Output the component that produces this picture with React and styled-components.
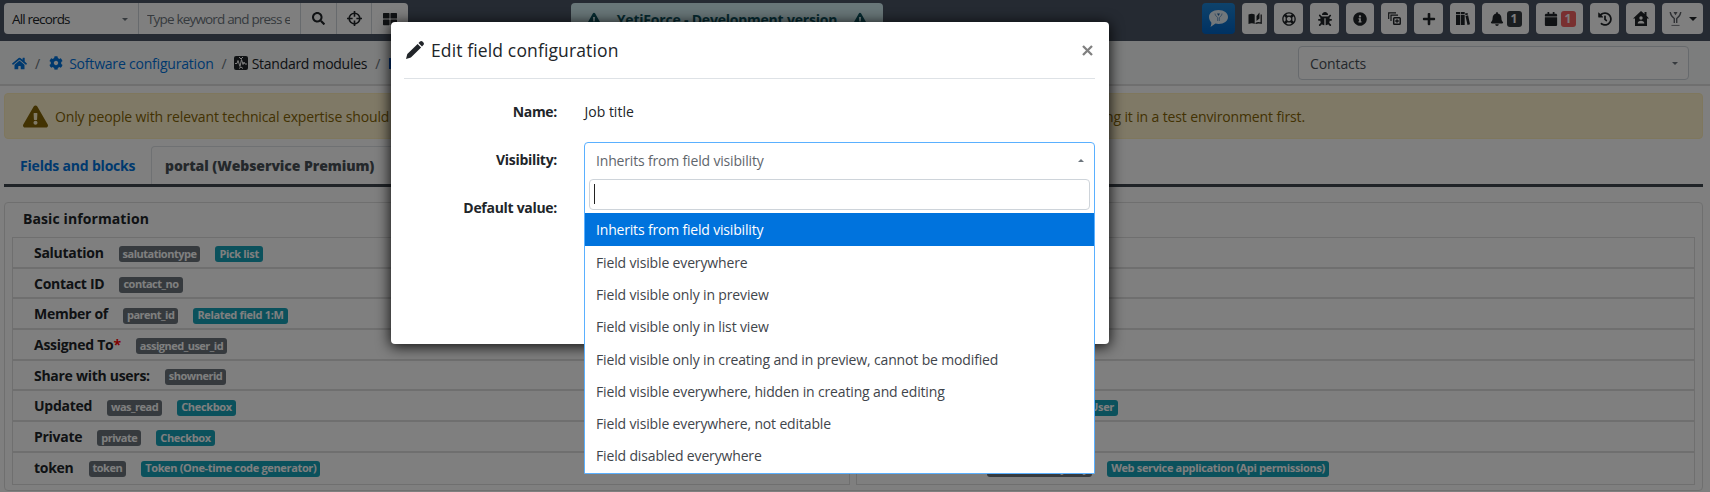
import React from 'react';
import styled, { createGlobalStyle, css } from 'styled-components';
import { FaSearch, FaThLarge, FaHome, FaCog, FaExclamationTriangle, FaBug, FaInfoCircle, FaPlus, FaBell, FaCalendar, FaHistory, FaRegLifeRing } from 'react-icons/fa';

const Global = createGlobalStyle`
  * { box-sizing: border-box; }
  html, body { margin: 0; height: 100%; overflow: hidden; background: #fff; }
  body { font: 14px/1.5 "Open Sans", "Noto Sans", sans-serif; color: #212529; }
  svg { display: block; flex: none; }
`;

const Screen = styled.div`
  position: relative;
  width: 1710px;
  height: 492px;
  overflow: hidden;
  white-space: nowrap;
`;

const TopBar = styled.header`
  display: flex;
  height: 41px;
  padding: 3px 7px 7px 4px;
  background: #4b5465;
`;

const SearchGroup = styled.div`
  display: flex;
  height: 31px;
  width: 404px;
  border-radius: 4px;
  background: #fff;
  overflow: hidden;
`;

const SearchCell = styled.div`
  display: flex;
  align-items: center;
  justify-content: ${p => (p.$center ? 'center' : 'space-between')};
  width: ${p => p.$w}px;
  padding: ${p => (p.$center ? '0' : '2px 10px 0 8px')};
  border-right: ${p => (p.$last ? '0' : '1px solid #ced4da')};
  color: ${p => p.$color || '#212529'};
  font-size: 13.5px;
  letter-spacing: -0.82px;
  overflow: hidden;
`;

const Clip = styled.span`
  overflow: hidden;
`;

const Caret = styled.i`
  width: 0;
  height: 0;
  border: ${p => p.$size || 3.5}px solid transparent;
  ${p => (p.$up
    ? css`border-bottom-color: ${p.$color || '#6c757d'}; border-top-width: 0;`
    : css`border-top-color: ${p.$color || '#6c757d'}; border-bottom-width: 0;`)}
`;

const DevBanner = styled.div`
  display: flex;
  align-items: center;
  justify-content: center;
  gap: 16px;
  width: 312px;
  height: 32px;
  margin: 0 auto 0 163px;
  border-radius: 4px;
  background: #d1ecf1;
  color: #0c5460;
  font-weight: 700;
  letter-spacing: -0.2px;
`;

const Tools = styled.div`
  display: flex;
  gap: 7px;
`;

const ToolButton = styled.div`
  display: flex;
  align-items: center;
  justify-content: center;
  gap: ${p => p.$gap || 3}px;
  width: ${p => p.$w}px;
  height: 31px;
  border-radius: 4px;
  background: ${p => (p.$blue ? 'linear-gradient(#1c86d8, #0063c4)' : '#fff')};
  color: #212529;
`;

const Count = styled.span`
  display: grid;
  place-items: center;
  width: 15px;
  height: 16px;
  border-radius: 3px;
  background: ${p => p.$bg};
  color: #f8f9fa;
  font-size: 12px;
  font-weight: 700;
  line-height: 1;
`;

const Crumbs = styled.nav`
  display: flex;
  align-items: center;
  justify-content: space-between;
  height: 45px;
  padding: 0 21px 0 12px;
  background: #f8fafb;
  border-bottom: 2px solid #dfdfdf;
`;

const CrumbList = styled.div`
  display: flex;
  align-items: center;
  padding-top: 1px;
  color: #6c757d;
`;

const Crumb = styled.span`
  display: flex;
  align-items: center;
  gap: ${p => p.$gap || 6}px;
  color: ${p => (p.$dark ? '#212529' : '#0073dd')};
  letter-spacing: ${p => p.$ls || 0}px;
`;

const Slash = styled.span`
  margin: 0 ${p => p.$r || 9}px 0 8px;
`;

const ModuleSelect = styled.div`
  display: flex;
  align-items: center;
  justify-content: space-between;
  width: 391px;
  height: 34px;
  padding: 1px 10px 0 11px;
  border: 1px solid #ced4da;
  border-radius: 4px;
  background: #fff;
  color: #495057;
  letter-spacing: -0.1px;
`;

const Warning = styled.div`
  display: flex;
  align-items: center;
  height: 46px;
  margin: 7px 7px 0 4px;
  padding: 0 18px;
  border: 1px solid #ffeeba;
  border-radius: 4px;
  background: #fff3cd;
  color: #856404;
  letter-spacing: -0.13px;
`;

const WarningText = styled.span`
  width: ${p => p.$w}px;
  margin-left: ${p => p.$ml}px;
`;

const Tabs = styled.div`
  display: flex;
  height: 48px;
  margin: 0 7px 0 4px;
  padding-top: 7px;
  border-bottom: 3px solid #3f474f;
`;

const Tab = styled.div`
  display: flex;
  align-items: center;
  width: ${p => p.$w}px;
  padding: 0 0 1px ${p => p.$pl}px;
  border: ${p => (p.$active ? '1px solid #dee2e6' : '1px solid transparent')};
  border-bottom: 0;
  border-radius: 4px 4px 0 0;
  color: ${p => (p.$active ? '#495057' : '#0073dd')};
  font-weight: ${p => (p.$active ? 800 : 700)};
  letter-spacing: ${p => (p.$active ? -0.08 : -0.2)}px;
`;

const Panel = styled.section`
  height: 289px;
  margin: 15px 7px 0 4px;
  padding: 0 7px;
  border: 1px solid #dfdfdf;
  border-radius: 4px;
`;

const PanelTitle = styled.div`
  height: 34px;
  padding: 5px 0 0 11px;
  font-weight: 700;
  letter-spacing: 0.1px;
`;

const Columns = styled.div`
  display: grid;
  grid-template-columns: 838px 839px;
  justify-content: space-between;
`;

const FieldList = styled.div`
  border: 1px solid #dfdfdf;
`;

const FieldRow = styled.div`
  display: flex;
  align-items: center;
  justify-content: ${p => (p.$end ? 'flex-end' : 'flex-start')};
  height: 28.7px;
  padding: 0 0 0 21px;
  ${p => p.$end && css`width: ${p.$end}px;`}
  font-weight: 700;
  letter-spacing: -0.28px;
`;

const Line = styled.div`
  height: 30.7px;
  border-bottom: ${p => (p.$last ? '0' : '2px solid #dfdfdf')};
`;

const Required = styled.span`
  color: #ff0000;
`;

const Badge = styled.span`
  display: flex;
  align-items: center;
  height: 16px;
  margin: 4px 0 0 15px;
  padding: 0 4px 1px;
  border-radius: 3px;
  background: ${p => (p.$info ? '#17a2b8' : '#6c757d')};
  color: #fff;
  font-size: 11px;
  font-weight: 700;
  letter-spacing: ${p => (p.$info ? -0.34 : -0.5)}px;
`;

const Backdrop = styled.div`
  position: absolute;
  inset: 0;
  background: rgba(0, 0, 0, 0.5);
`;

const Modal = styled.div`
  position: absolute;
  left: 391px;
  top: 22px;
  width: 718px;
  height: 322px;
  padding: 0 14px 0 13px;
  border-radius: 4px;
  background: #fff;
  box-shadow: 0 2px 14px 1px rgba(0, 0, 0, 0.85);
`;

const ModalHeader = styled.div`
  display: flex;
  align-items: center;
  height: 57px;
  padding: 0 2px;
  border-bottom: 1px solid #dee2e6;
`;

const ModalTitle = styled.h5`
  flex: 1;
  margin: 0 0 0 7px;
  font-size: 17.5px;
  font-weight: 500;
  letter-spacing: 0.13px;
`;

const FormRow = styled.div`
  display: flex;
  height: ${p => p.$h || 48.5}px;
`;

const Label = styled.div`
  width: 153px;
  margin-right: 27.5px;
  text-align: right;
  font-weight: 700;
  letter-spacing: -0.3px;
`;

const Form = styled.div`
  padding-top: 22px;
`;

const Dropdown = styled.div`
  align-self: flex-start;
  width: 511px;
  height: 332px;
  margin: -7px 0 0 -0.5px;
  border: 1px solid #5ab0ff;
  border-radius: 4px 4px 1px 1px;
  background: #fff;
`;

const Selected = styled.div`
  display: flex;
  align-items: center;
  justify-content: space-between;
  height: 36px;
  padding: 0 10px 1px 11px;
  color: #5f666d;
  letter-spacing: -0.17px;
`;

const FilterBox = styled.div`
  display: flex;
  height: 31px;
  margin: 0 4px 3px;
  padding: 4px;
  border: 1px solid #ced4da;
  border-radius: 4px;
`;

const TextCaret = styled.i`
  width: 1px;
  height: 20px;
  background: #222;
`;

const Option = styled.div`
  display: flex;
  align-items: center;
  height: ${p => (p.$on ? 33 : 32.3)}px;
  padding: 1px 0 0 11px;
  background: ${p => (p.$on ? '#0073dd' : '#fff')};
  color: ${p => (p.$on ? '#fff' : '#3f454b')};
  font-weight: ${p => (p.$on ? 500 : 400)};
  letter-spacing: ${p => (p.$on ? -0.18 : -0.15)}px;
`;

const Target = () => (
  <svg width="15" height="15" viewBox="0 0 24 24" fill="none" stroke="currentColor" strokeWidth="2.6">
    <circle cx="12" cy="12" r="8.5" />
    <path d="M12 0v9M12 15v9M0 12h9M15 12h9" />
  </svg>
);

const PencilIcon = () => (
  <svg width="18" height="18" viewBox="0 0 18 18" fill="currentColor">
    <path d="M0 18l1.300-5L11.600 2.900l3.500 3.500L4.900 16.600zM12.500 2L14 .6c.8-.8 1.800-.7 2.500 0l.9.9c.7.800.7 1.700 0 2.500L16 5.500z" />
  </svg>
);

const CloseIcon = () => (
  <svg width="11" height="11" viewBox="0 0 11 11" stroke="#808080" strokeWidth="2.3">
    <path d="M1 1l9 9M10 1l-9 9" />
  </svg>
);

const YetiMark = ({ w, h, color }) => (
  <svg width={w} height={h} viewBox="0 0 16 20" fill="none" stroke={color} strokeWidth="1.7">
    <path d="M1.5 2c.5 4 2 6 5 8v5.5M14.500 2c-.5 4-2 6-5 8v5.500" />
    <path d="M5.500 2h5L8 6z" fill={color} stroke="none" />
    <path d="M3 18.500h10" strokeWidth="1" />
  </svg>
);

const ChatIcon = () => (
  <svg width="21" height="19" viewBox="0 0 21 19">
    <path d="M10.500 1C16 1 20 4 20 8s-4 7-9.500 7c-1 0-2-.1-3-.4L2.500 18c.5-1.500 1-3 .8-4.500C2 12 1 10.200 1 8c0-4 4-7 9.500-7z" fill="#e3eef7" />
    <path d="M7 4.500c.3 2 1.300 3 2.700 4V12M14 4.500c-.3 2-1.300 3-2.700 4V12" fill="none" stroke="#6f9cc4" strokeWidth="1" />
    <path d="M9 4.500h3L10.500 7z" fill="#1d5f9e" />
  </svg>
);

const BookIcon = () => (
  <svg width="14" height="13" viewBox="0 0 14 13">
    <path d="M.5 2.500C3 1.200 5 1.500 6.700 2.500v9.500C5 11 3 11 .5 12z" fill="currentColor" />
    <path d="M7.500 11.500c1.800-1 3.600-1 5.700-.3V2.500" fill="none" stroke="currentColor" strokeWidth="1.300" />
    <path d="M8.500 4L11.500.5v6L8.500 9z" fill="currentColor" />
  </svg>
);

const CopyAddIcon = () => (
  <svg width="13" height="13" viewBox="0 0 13 13" fill="none" stroke="currentColor" strokeWidth="1.200">
    <path d="M.7 7V.9H8" />
    <path d="M3 9V3.200h7" />
    <rect x="5.700" y="5.700" width="6.500" height="6.500" rx=".8" strokeWidth="1.500" />
    <path d="M9 7.200v3.600M7.200 9h3.600" strokeWidth="1.300" />
  </svg>
);

const ShelfIcon = () => (
  <svg width="14" height="13" viewBox="0 0 14 13" fill="currentColor">
    <path d="M0 0h4v2H0zM0 2.800h4V13H0zM4.700 0h4v2h-4zM4.700 2.800h4V13h-4zM9 1.500l2.500-.6.5 1.700-2.500.7zM9.500 4l2.600-.7L14 12.300l-2.500.7z" />
  </svg>
);

const HomeUserIcon = () => (
  <svg width="16" height="15" viewBox="0 0 16 15">
    <path d="M8 0l3.500 3V1h2v3.800L16 7.500h-2V15H2V7.500H0z" fill="currentColor" />
    <circle cx="8" cy="7" r="1.700" fill="#fff" />
    <path d="M4.700 12.500c0-2 1.500-2.800 3.300-2.800s3.300.8 3.300 2.800z" fill="#fff" />
  </svg>
);

const ModuleIcon = () => (
  <svg width="14" height="14" viewBox="0 0 14 14">
    <rect width="14" height="14" rx="2" fill="#212529" />
    <path d="M1 7.500h2l1-3 2 6 1.500-7 1.500 5 1-2.500 1 2h2M5 1l2 2 2-2M5 12.500l2-1.500 2 1.500" fill="none" stroke="#fff" strokeWidth="1" />
  </svg>
);

const FolderMark = styled.i`
  width: 14px;
  height: 11px;
  background: #0052cc;
`;

const left = [
  ['Salutation', 'salutationtype', 'Pick list'],
  ['Contact ID', 'contact_no'],
  ['Member of', 'parent_id', 'Related field 1:M'],
  ['Assigned To', 'assigned_user_id', null, true],
  ['Share with users:', 'shownerid'],
  ['Updated', 'was_read', 'Checkbox'],
  ['Private', 'private', 'Checkbox'],
  ['token', 'token', 'Token (One-time code generator)'],
];

// Each right-hand row ends its badges at `end`, measured from the list's left edge.
const right = [
  {}, {}, {}, {}, {},
  { end: 261, badges: [['User', true]] },
  {},
  { end: 472, badges: [['server_identity_key', false], ['Web service application (Api permissions)', true]] },
];

const options = [
  'Field visible everywhere',
  'Field visible only in preview',
  'Field visible only in list view',
  'Field visible only in creating and in preview, cannot be modified',
  'Field visible everywhere, hidden in creating and editing',
  'Field visible everywhere, not editable',
  'Field disabled everywhere',
];

export default function App() {
  return (
    <Screen>
      <Global />
      <TopBar>
        <SearchGroup>
          <SearchCell $w={135}>All records<Caret /></SearchCell>
          <SearchCell $w={162} $color="#6c757d"><Clip>Type keyword and press enter</Clip></SearchCell>
          <SearchCell $w={36} $center><FaSearch size={13} /></SearchCell>
          <SearchCell $w={35} $center><Target /></SearchCell>
          <SearchCell $w={36} $center $last><FaThLarge size={14} /></SearchCell>
        </SearchGroup>
        <DevBanner><FaExclamationTriangle size={14} />YetiForce - Development version<FaExclamationTriangle size={14} /></DevBanner>
        <Tools>
          <ToolButton $w={33} $blue><ChatIcon /></ToolButton>
          <ToolButton $w={25}><BookIcon /></ToolButton>
          <ToolButton $w={29}><FaRegLifeRing size={14} /></ToolButton>
          <ToolButton $w={29}><FaBug size={14} /></ToolButton>
          <ToolButton $w={28}><FaInfoCircle size={14} /></ToolButton>
          <ToolButton $w={26}><CopyAddIcon /></ToolButton>
          <ToolButton $w={29}><FaPlus size={14} /></ToolButton>
          <ToolButton $w={25}><ShelfIcon /></ToolButton>
          <ToolButton $w={47}><FaBell size={14} /><Count $bg="#343a40">1</Count></ToolButton>
          <ToolButton $w={47}><FaCalendar size={14} /><Count $bg="#f26060">1</Count></ToolButton>
          <ToolButton $w={29}><FaHistory size={14} /></ToolButton>
          <ToolButton $w={29}><HomeUserIcon /></ToolButton>
          <ToolButton $w={41} $gap={7}><YetiMark w={13} h={17} color="#5c6066" /><Caret $size={4} $color="#212529" /></ToolButton>
        </Tools>
      </TopBar>
      <Crumbs>
        <CrumbList>
          <Crumb><FaHome size={15} /></Crumb><Slash>/</Slash>
          <Crumb $ls={-0.2}><FaCog size={14} />Software configuration</Crumb><Slash $r={7}>/</Slash>
          <Crumb $dark $gap={4} $ls={-0.28}><ModuleIcon />Standard modules</Crumb><Slash>/</Slash>
          <FolderMark />
        </CrumbList>
        <ModuleSelect>Contacts<Caret /></ModuleSelect>
      </Crumbs>
      <Warning>
        <FaExclamationTriangle size={25} />
        <WarningText $w={336} $ml={7}>Only people with relevant technical expertise should</WarningText>
        <WarningText $w={210} $ml={714}>ng it in a test environment first.</WarningText>
      </Warning>
      <Tabs>
        <Tab $w={147} $pl={15}>Fields and blocks</Tab>
        <Tab $w={260} $pl={13} $active>portal (Webservice Premium)</Tab>
      </Tabs>
      <Panel>
        <PanelTitle>Basic information</PanelTitle>
        <Columns>
          <FieldList>
            {left.map(([n, c, t, r], i) => (
              <Line key={n} $last={i === 7}>
                <FieldRow>{n}{r && <Required>*</Required>}<Badge>{c}</Badge>{t && <Badge $info>{t}</Badge>}</FieldRow>
              </Line>
            ))}
          </FieldList>
          <FieldList>
            {right.map(({ end, badges = [] }, i) => (
              <Line key={i} $last={i === 7}>
                <FieldRow $end={end}>{badges.map(([t, info]) => <Badge key={t} $info={info}>{t}</Badge>)}</FieldRow>
              </Line>
            ))}
          </FieldList>
        </Columns>
      </Panel>
      <Backdrop />
      <Modal>
        <ModalHeader><PencilIcon /><ModalTitle>Edit field configuration</ModalTitle><CloseIcon /></ModalHeader>
        <Form>
          <FormRow $h={47.5}><Label>Name:</Label>Job title</FormRow>
          <FormRow>
            <Label>Visibility:</Label>
            <Dropdown>
              <Selected>Inherits from field visibility<Caret $up /></Selected>
              <FilterBox><TextCaret /></FilterBox>
              <Option $on>Inherits from field visibility</Option>
              {options.map(o => <Option key={o}>{o}</Option>)}
            </Dropdown>
          </FormRow>
          <FormRow><Label>Default value:</Label></FormRow>
        </Form>
      </Modal>
    </Screen>
  );
}
